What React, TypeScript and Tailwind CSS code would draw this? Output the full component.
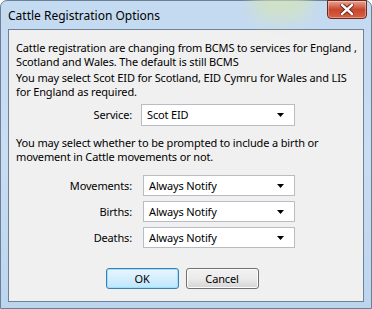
import React from "react"

const font = { fontFamily: '"Noto Sans", "Open Sans", sans-serif' }

function Combo({ value, width }: { value: string; width: string }) {
  return (
    <div
      className={`relative flex h-[21px] items-center border border-[#b9bcc2] bg-white pl-[5px] text-black ${width}`}
    >
      <span>{value}</span>
      <svg className="absolute right-[10px] top-[8px]" width="7" height="4" viewBox="0 0 7 4">
        <path d="M0 0 H7 L3.5 4 Z" fill="#000" />
      </svg>
    </div>
  )
}

function Row({ label, value }: { label: string; value: string }) {
  return (
    <div className="flex items-center">
      <div className="w-[127px] pr-[11px] text-right">{label}</div>
      <Combo value={value} width="w-[152px]" />
    </div>
  )
}

export default function App() {
  return (
    <div className="h-[309px] w-[372px] overflow-hidden bg-white" style={font}>
      <div className="relative h-[309px] w-[372px] rounded-t-[7px] border border-[#6b7f96] bg-gradient-to-b from-[#c4daf1] via-[#c9ddf3] to-[#bcd5ee] px-[7px] pb-[6px] pt-[28px]">
        {/* glass highlight */}
        <div className="pointer-events-none absolute left-[250px] top-[-20px] h-[40px] w-[60px] rounded-full bg-[#d6e6b0] opacity-60 blur-[8px]" />

        <div className="absolute left-[7px] top-[6px] text-[12px] text-black">Cattle Registration Options</div>

        {/* close button */}
        <div className="absolute left-[326px] top-[-1px] flex h-[19px] w-[40px] items-center justify-center rounded-b-[4px] border border-[#6b2a1e] bg-gradient-to-b from-[#e8a493] via-[#c8462e] to-[#d8613f] shadow-[inset_0_0_0_1px_rgba(255,255,255,0.35)]">
          <svg width="14" height="11" viewBox="0 0 14 11">
            <path
              d="M2 1 L12 10 M12 1 L2 10"
              stroke="#5a1c12"
              strokeWidth="4.2"
              strokeLinecap="square"
            />
            <path d="M2 1 L12 10 M12 1 L2 10" stroke="#fff" strokeWidth="2.4" strokeLinecap="square" />
          </svg>
        </div>

        <div className="h-full w-full whitespace-nowrap border border-[#6e8296] bg-[#f0f0f0] px-[7px] pt-[11px] text-[11px] leading-[14px] tracking-[-0.15px] text-black">
          <p>
            Cattle registration are changing from BCMS to services for England ,
            <br />
            Scotland and Wales. The default is still BCMS
          </p>
          <p className="mt-[2px]">
            You may select Scot EID for Scotland, EID Cymru for Wales and LIS
            <br />
            for England as required.
          </p>

          <div className="mt-[5px] flex items-center">
            <div className="w-[125px] pr-[9px] text-right">Service:</div>
            <Combo value="Scot EID" width="w-[154px] h-[22px]" />
          </div>

          <p className="mt-[10px]">
            You may select whether to be prompted to include a birth or
            <br />
            movement in Cattle movements or not.
          </p>

          <div className="mt-[11px] flex flex-col gap-[5px]">
            <Row label="Movements:" value="Always Notify" />
            <Row label="Births:" value="Always Notify" />
            <Row label="Deaths:" value="Always Notify" />
          </div>

          <div className="mt-[20px] flex justify-center gap-[7px] pr-[8px]">
            <button className="h-[21px] w-[73px] rounded-[3px] border border-[#3c7fb1] bg-gradient-to-b from-[#eaf6fd] to-[#bee6fd] shadow-[inset_0_0_0_1px_#9ee0fb]">
              OK
            </button>
            <button className="h-[21px] w-[73px] rounded-[3px] border border-[#707070] bg-gradient-to-b from-[#f2f2f2] via-[#ebebeb] to-[#d5d5d5] shadow-[inset_0_0_0_1px_#fcfcfc]">
              Cancel
            </button>
          </div>
        </div>
      </div>
    </div>
  )
}
